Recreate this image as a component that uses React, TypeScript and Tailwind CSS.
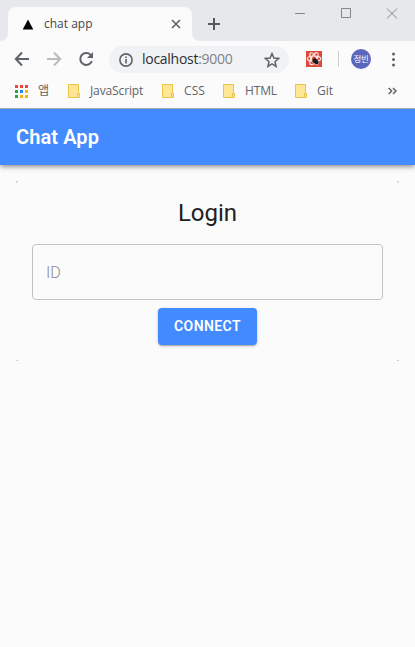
import React from "react";

const ui = "font-['Open_Sans','Noto_Sans_CJK_KR',sans-serif]";

function Folder() {
  return (
    <svg width="13" height="14" viewBox="0 0 13 14" className="shrink-0">
      <path d="M.5.5h10v9h1v4H.5z" fill="#ffe694" stroke="#e8c54d" />
      <path d="M9.500 13v-3.500h1" fill="none" stroke="#e8c54d" />
    </svg>
  );
}

function Bookmark({ label, width, text }: { label: string; width: string; text: string }) {
  return (
    <div className={`flex shrink-0 items-center gap-[9px] ${width}`}>
      <Folder />
      <span className={`whitespace-nowrap ${text}`}>{label}</span>
    </div>
  );
}

function TabStrip() {
  return (
    <div className="relative flex h-[41px] bg-[#e7e8ec] pl-2">
      <svg className="absolute left-0 top-[33px]" width="8" height="8" viewBox="0 0 8 8">
        <path d="M8 0v8H0a8 8 0 0 0 8-8z" fill="#fbfbfb" />
      </svg>
      <svg className="absolute left-[192px] top-[33px]" width="8" height="8" viewBox="0 0 8 8">
        <path d="M0 0v8h8a8 8 0 0 1-8-8z" fill="#fbfbfb" />
      </svg>
      <div className="mt-[7px] flex h-[34px] w-[184px] items-center rounded-t-lg bg-[#fbfbfb] pl-[14px] pr-[11px]">
        <svg width="12" height="11" viewBox="0 0 12 11">
          <path d="M6 .5 11.300 10.500H.700z" fill="#000" />
        </svg>
        <span className="ml-[10px] text-[12px] leading-4 text-[#45474b]">chat app</span>
        <svg className="ml-auto" width="10" height="10" viewBox="0 0 10 10">
          <path d="m1 1 8 8M9 1 1 9" stroke="#5f6368" strokeWidth="1.600" />
        </svg>
      </div>
      <svg className="ml-[16px] mt-[18px]" width="12" height="12" viewBox="0 0 12 12">
        <path d="M6 0v12M0 6h12" stroke="#55585c" strokeWidth="2" />
      </svg>
      <svg className="ml-[75px] mt-[8px]" width="103" height="11" viewBox="0 0 103 11" fill="none" stroke="#85868a">
        <path d="M0 5.500h10M92 .5l10 10M102 .5l-10 10" />
        <path d="M46.500.5h9v9h-9z" />
      </svg>
    </div>
  );
}

function Toolbar() {
  return (
    <div className="flex h-[36px] items-center pl-[14px]">
      <svg width="16" height="16" viewBox="0 0 16 16" fill="none" stroke="#5f6368" strokeWidth="2">
        <path d="M15 8H2.500M8 1.500 1.800 8 8 14.500" />
      </svg>
      <svg className="ml-4" width="16" height="16" viewBox="0 0 16 16" fill="none" stroke="#babcbe" strokeWidth="2">
        <path d="M1 8h12.500M8 1.500 14.200 8 8 14.500" />
      </svg>
      <svg className="ml-4" width="16" height="16" viewBox="0 0 16 16">
        <path d="M12.500 3.700A6 6 0 1 0 13.900 10" fill="none" stroke="#5f6368" strokeWidth="2" />
        <path d="M15 1v6H9z" fill="#5f6368" />
      </svg>
      <div className="ml-[15px] mt-px flex h-[27px] w-[180px] items-center rounded-full bg-[#f1f2f5] pl-[10px] pr-[9px]">
        <svg width="14" height="14" viewBox="0 0 14 14">
          <circle cx="7" cy="7" r="6.100" fill="none" stroke="#5f6368" strokeWidth="1.600" />
          <path d="M6.200 6h1.600v4.400H6.200zM6.200 3.400h1.600V5H6.200z" fill="#5f6368" />
        </svg>
        <span className="ml-[9px] w-[92px] whitespace-nowrap text-[14px] leading-5 tracking-[-0.28px] text-[#2c2e31] -translate-y-px">
          localhost<span className="text-[#808388]">:9000</span>
        </span>
        <svg className="ml-auto" width="16" height="16" viewBox="0 0 16 16">
          <path d="m8 1.600 1.900 4.500 4.800.4L11 9.700l1.100 4.700L8 11.900l-4.100 2.500L5 9.700 1.300 6.500l4.800-.4z" fill="none" stroke="#5f6368" strokeWidth="1.500" />
        </svg>
      </div>
      <svg className="ml-[17px]" width="16" height="16" viewBox="0 0 16 16">
        <path d="M0 0h16v16H0z" fill="#dc493a" />
        <g fill="none" stroke="#fbe6e3" strokeWidth="1.200">
          <ellipse cx="8" cy="7.700" rx="6.700" ry="2.700" />
          <ellipse cx="8" cy="7.700" rx="6.700" ry="2.700" transform="rotate(60 8 7.700)" />
          <ellipse cx="8" cy="7.700" rx="6.700" ry="2.700" transform="rotate(120 8 7.700)" />
        </g>
        <ellipse cx="9.600" cy="10.400" rx="2.300" ry="3.500" fill="#24191a" transform="rotate(-45 9.600 10.400)" />
        <path d="m6 10 6 1.500M9 7.500l1 6M6.500 12.500l5.500-4" stroke="#24191a" strokeWidth=".8" />
      </svg>
      <div className="ml-4 h-4 w-px bg-[#cfd0d3]" />
      <div className="ml-3 flex size-5 items-center justify-center rounded-full bg-[#5a67bd] text-[8.5px] leading-none tracking-[-0.3px] text-white">
        정빈
      </div>
      <svg className="ml-[20px]" width="4" height="16" viewBox="0 0 4 16" fill="#5f6368">
        <circle cx="2.500" cy="3" r="1.500" />
        <circle cx="2.500" cy="8.500" r="1.500" />
        <circle cx="2.500" cy="14" r="1.500" />
      </svg>
    </div>
  );
}

function Bookmarks() {
  return (
    <div className="flex h-[32px] items-center border-b border-[#aaacb0] pb-[3px] pl-[15px] text-[12px] leading-4 text-[#5f6368]">
      <svg className="shrink-0" width="13" height="13" viewBox="0 0 13 13">
        <path d="M0 0h3v3H0zM5 0h3v3H5zM10 0h3v3h-3z" fill="#f0443a" />
        <path d="M0 5h3v3H0zM0 10h3v3H0z" fill="#2ba25c" />
        <path d="M5 5h3v3H5z" fill="#2587f5" />
        <path d="M10 5h3v3h-3zM5 10h3v3H5zM10 10h3v3h-3z" fill="#f7b20c" />
      </svg>
      <span className="ml-[10px] w-[30px] shrink-0 text-[12px]">앱</span>
      <Bookmark label="JavaScript" width="w-[94px]" text="tracking-[-0.12px]" />
      <Bookmark label="CSS" width="w-[61px]" text="tracking-[0.1px]" />
      <Bookmark label="HTML" width="w-[72px]" text="tracking-[-0.15px]" />
      <Bookmark label="Git" width="w-[93px]" text="" />
      <svg width="9" height="8" viewBox="0 0 9 8" fill="none" stroke="#5f6368" strokeWidth="1.500">
        <path d="m.7 1 3 3-3 3M5 1l3 3-3 3" />
      </svg>
    </div>
  );
}

function Corner({ place }: { place: string }) {
  return <span className={`absolute size-[2px] border-[#d0d0d0] ${place}`} />;
}

export default function App() {
  return (
    <div className="h-[647px] w-[415px] overflow-hidden bg-[#fbfbfb] font-['Roboto',sans-serif]">
      <div className={ui}>
        <TabStrip />
        <Toolbar />
        <Bookmarks />
      </div>
      <header className="relative flex h-14 items-center bg-[#448aff] px-4 shadow-[0_2px_4px_-1px_rgba(0,0,0,0.3),0_3px_5px_rgba(0,0,0,0.18)]">
        <h1 className="text-[20px] font-semibold leading-7 tracking-[0.1px] text-white">Chat App</h1>
      </header>
      <main className="relative mx-4 mt-4 flex h-[180px] flex-col items-center px-4 pt-4">
        <Corner place="left-0 top-0 border-l border-t" />
        <Corner place="right-0 top-0 border-r border-t" />
        <Corner place="bottom-0 left-0 border-b" />
        <Corner place="bottom-0 right-0 border-b" />
        <h2 className="text-[24px] leading-8 text-[#212121]">Login</h2>
        <input
          aria-label="ID"
          placeholder="ID"
          className="mt-[15px] h-14 w-full shrink-0 rounded-[4px] border border-[#c2c2c2] bg-transparent px-[13px] text-[16px] placeholder:font-light placeholder:text-[#8c8c8c] placeholder:opacity-100"
        />
        <button className="mt-2 h-[37px] w-[99px] shrink-0 rounded-[4px] bg-[#448aff] pb-[2px] text-[14px] font-semibold leading-none tracking-[0.4px] text-white shadow-[0_1px_3px_rgba(0,0,0,0.24),0_2px_1px_-1px_rgba(0,0,0,0.18)]">
          CONNECT
        </button>
      </main>
    </div>
  );
}
